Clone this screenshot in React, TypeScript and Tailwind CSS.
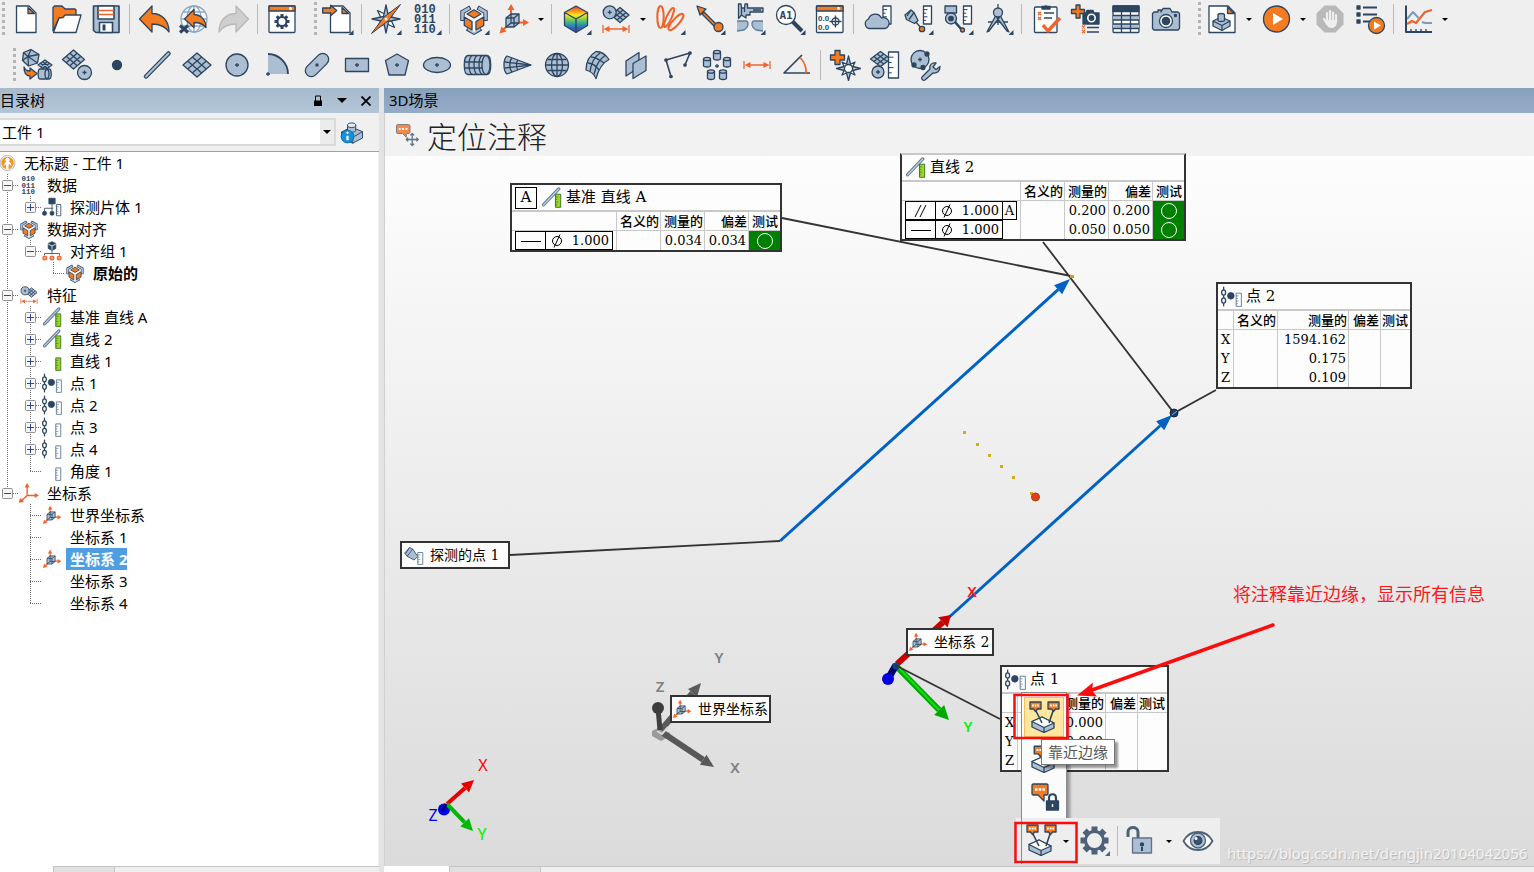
import type { ReactNode } from 'react';

const N = '#2c4560';
const L = '#abbed2';
const O = '#f47b20';
const R = '#f0642c';

const uiFont = "font-['Noto_Sans','Noto_Sans_CJK_SC',sans-serif]";
const noteFont = "font-['DejaVu_Serif','Noto_Sans_CJK_SC',serif]";

/* ---------- icon parts ---------- */

function Mesh({ x, y, w, h }: { x: number; y: number; w: number; h: number }) {
  const lines: string[] = [];
  for (const t of [1 / 3, 2 / 3]) {
    lines.push(`M${x - w + w * t} ${y - h * t}L${x + w * t} ${y + h - h * t}`);
    lines.push(`M${x - w + w * t} ${y + h * t}L${x + w * t} ${y - h + h * t}`);
  }
  return (
    <g>
      <path d={`M${x - w} ${y}L${x} ${y - h}L${x + w} ${y}L${x} ${y + h}z`} />
      <path d={lines.join('')} fill="none" />
    </g>
  );
}

function Ruler({ x, y, w = 8, h = 18, fill = '#fff', stroke = N }: { x: number; y: number; w?: number; h?: number; fill?: string; stroke?: string }) {
  const s = h / 5;
  return (
    <g stroke={stroke}>
      <rect x={x} y={y} width={w} height={h} fill={fill} />
      <path d={`M${x} ${y + s}h${w / 2}M${x} ${y + 2 * s}h${w / 3}M${x} ${y + 3 * s}h${w / 2}M${x} ${y + 4 * s}h${w / 3}`} fill="none" strokeWidth="1" />
    </g>
  );
}

const corner = <path d="M31.5 27v5h-5z" fill={N} stroke="none" />;
const plusMark = (x: number, y: number) => <path d={`M${x - 2} ${y}h4M${x} ${y - 2}v4`} fill="none" />;
const can = (x: number, y: number) => (
  <g key={`${x}-${y}`}>
    <path d={`M${x - 3.5} ${y - 3}v6.500c0 2 7 2 7 0v-6.500`} />
    <ellipse cx={x} cy={y - 3} rx="3.500" ry="1.700" />
  </g>
);
const dimension = (y: number) => (
  <g stroke={R} fill={R} strokeWidth="1.300">
    <path d={`M3 ${y - 4}v8M29 ${y - 4}v8M6 ${y}h20`} />
    <path d={`M3.500 ${y}l6-3v6zM28.500 ${y}l-6-3v6z`} stroke="none" />
  </g>
);
const bubble = (x: number, y: number) => (
  <g>
    <path d={`M${x} ${y}h11v7h-3.500l-2 2.500-2-2.500H${x}z`} fill={O} />
    <path d={`M${x + 2} ${y + 3.500}h7`} stroke="#fff" strokeWidth="1.800" strokeDasharray="1.800 0.900" />
  </g>
);
const slab = (
  <g>
    <path d="M4 20.500l10-4.500 12 6v5l-10 4.500L4 26z" />
    <path d="M4 20.500l10-4.500 12 6-10 4.500z" fill="#fff" />
    <path d="M16 26.500v5" />
  </g>
);
const alignCube = (
  <g>
    <g fill="none" strokeWidth="4.500" strokeLinejoin="miter">
      <path d="M4.500 18V9l8-4.500M27.500 18V9l-8-4.500M9 25.500l7 4 7-4" />
      <path d="M4.500 17V9l7-4M27.500 17V9l-7-4M10 26l6 3.500 6-3.500" stroke={L} strokeWidth="2.600" />
    </g>
    <path d="M8 10l8-5 8 5 1.500 3.500v10L16 29l-9.500-5.500v-10z" fill="#f3f5f8" stroke="none" />
    <path d="M9 11l7-4.200 7 4.200-7 4z" fill={O} />
    <path d="M6.300 14l7.700 4.500v8.500l-7.700-4.500zM25.700 14L18 18.500v8.500l7.700-4.500z" fill={O} />
  </g>
);
const axesCube = (
  <g>
    <path d="M13 11V5M20 19.500h7M9 23l-5 5" stroke={R} strokeWidth="2" />
    <path d="M13 1l3.500 6h-7zM31 19.500l-6 3.500v-7zM1.500 30.500l2-7 5 5z" fill={R} stroke="none" />
    <path d="M8 15l5-4h8v9l-5 4H8z" />
    <path d="M8 15h8v9M16 15l5-4M13 11v9h8M13 20l-5 4" fill="none" />
  </g>
);
const features = (
  <g>
    <Mesh x={20} y={12} w={9} h={7.5} />
    <circle cx="9.700" cy="9.300" r="6.500" />
    {plusMark(9.7, 9.3)}
    {dimension(26)}
  </g>
);
const bits = (
  <g fill={N} stroke="none" fontFamily="Liberation Mono, monospace" fontWeight="700" fontSize="12">
    <text x="4" y="10">010</text>
    <text x="4" y="20">011</text>
    <text x="4" y="30">110</text>
  </g>
);
const probe = (
  <g>
    <path d="M1 13l8-9 5 2.500 8 12-6 5.500-11-6z" />
    <path d="M9 4l-6.500 10M14 6.500L5 18" fill="none" />
  </g>
);
const part = (
  <g>
    <path d="M2 16l13-6.500 15 6v8.500l-13 7L2 24z" />
    <path d="M2 16l15 7 13-7.500M17 23v8" fill="none" />
    <path d="M10 7v7c0 3 11 3 11 0V7" />
    <ellipse cx="15.500" cy="7" rx="5.500" ry="3" fill="#e5ebf2" />
  </g>
);
const gearTeeth = (cx: number, cy: number, r: number, w: number) =>
  [0, 45, 90, 135, 180, 225, 270, 315].map((a) => (
    <rect key={a} x={cx - w / 2} y={cy - r} width={w} height={r * 0.4} transform={`rotate(${a} ${cx} ${cy})`} stroke="none" />
  ));

/* ---------- icons ---------- */

const icons: Record<string, ReactNode> = {
  新建: (
    <g>
      <path d="M6.500 3h12.500l7 7v19.500H6.500z" fill="#fff" />
      <path d="M18 4.500v6h6.500z" fill={O} />
    </g>
  ),
  打开: (
    <g>
      <path d="M3 28V4.500L4.500 3h7.500l3 3h10l1 1v8L9 15z" fill={O} />
      <path d="M3.500 29.500L9 15l4-.500 2-2.500h16l-5 17.500z" fill="#fff" />
    </g>
  ),
  保存: (
    <g strokeWidth="1.600">
      <path d="M3.500 3h25.500v26.500H6l-2.500-2z" />
      <path d="M8 3h16v13H8z" fill="#fff" />
      <path d="M8.500 7.500h15M8.500 11.500h15" stroke={R} />
      <path d="M9.500 29.500v-10h13v10z" fill="#fff" />
      <path d="M12.500 21.500h3v6h-3z" fill={N} stroke="none" />
    </g>
  ),
  撤销: <path d="M1.500 16L14 3v7.500c10 0 17 7 17 18.500-4-6-9-8-17-8v8z" fill={O} />,
  全部撤销: (
    <g>
      <g stroke="#8da7c0" fill="#f4f7fa">
        <circle cx="16" cy="16" r="13" />
        <path d="M16 3v26M3 16h26M5 9h22M5 23h22" />
        <ellipse cx="16" cy="16" rx="7" ry="13" fill="none" />
      </g>
      <path d="M6.500 16L16 6.500v5c7 0 12 6 12 13-3-4-7-5-12-5v5z" fill={O} />
      <path d="M2 22.500l8 7M10 22.500l-8 7" strokeWidth="3" />
    </g>
  ),
  重做: <path d="M30.500 16L18 3v7.500C8 10.500 1 17.500 1 29c4-6 9-8 17-8v8z" fill="#cfcfcf" stroke="#b9b9b9" />,
  设置窗口: (
    <g>
      <rect x="3" y="3" width="26" height="26.500" rx="1" fill="#fff" />
      <path d="M3 3h26v5H3z" fill={O} />
      <circle cx="24.500" cy="5.500" r="1.500" fill="#fff" stroke="none" />
      <g fill={N}>{gearTeeth(16, 18.5, 7.5, 3)}</g>
      <circle cx="16" cy="18.500" r="4.500" fill="#fff" strokeWidth="2" />
    </g>
  ),
  导入: (
    <g>
      <path d="M8.500 3H21l7 7v19.500H8.500z" fill="#fff" />
      <path d="M20 4.500v6h6.500z" fill={O} />
      <path d="M.700 5h8V2.200l6 5.300-6 5.300V10h-8z" fill={O} />
      {corner}
    </g>
  ),
  对齐: (
    <g>
      <path d="M7.500 7.500l8.500 4 8.500-4-4 8.500 4 8.500-8.500-4-8.500 4 4-8.500z" fill="#fff" />
      <path d="M16 2l2.500 11.500L30 16l-11.500 2.500L16 30l-2.500-11.500L2 16l11.500-2.500z" />
      <path d="M30.500 1.500L18 18 1.500 30.500 14 14z" fill={O} strokeWidth="1" />
      <circle cx="16" cy="16" r="1.500" fill="#fff" stroke="none" />
      {corner}
    </g>
  ),
  数据: <g>{bits}{corner}</g>,
  数据对齐: <g>{alignCube}{corner}</g>,
  坐标系: axesCube,
  颜色图: (
    <g>
      <defs>
        <linearGradient id="spectrum" x1="0" x2="0" y1="0" y2="1">
          <stop offset="0" stopColor="#f0322a" />
          <stop offset=".2" stopColor="#ff9a1a" />
          <stop offset=".34" stopColor="#ffe81c" />
          <stop offset=".5" stopColor="#7fd04a" />
          <stop offset=".68" stopColor="#2ba0a8" />
          <stop offset=".84" stopColor="#2f63c0" />
          <stop offset="1" stopColor="#7b3fb0" />
        </linearGradient>
      </defs>
      <path d="M16 3l11.500 6.500v13L16 29.500 4.500 22.500v-13z" fill="url(#spectrum)" />
      <path d="M4.500 9.500L16 16l11.500-6.500M16 16v13.500" fill="none" />
      {corner}
    </g>
  ),
  特征: features,
  横截面: (
    <g>
      <g fill="none" stroke={R} strokeWidth="2">
        <ellipse cx="6.500" cy="14" rx="3.200" ry="11" />
        <ellipse cx="15" cy="14.500" rx="2.500" ry="10.500" transform="rotate(25 15 14.500)" />
        <ellipse cx="22" cy="19" rx="3.200" ry="10.500" transform="rotate(42 22 19)" />
      </g>
      {corner}
    </g>
  ),
  偏差: (
    <g>
      <path d="M10 9l13 13-2 2L8 11z" fill={O} />
      <path d="M3 3l9 3-6 6z" fill={O} />
      <circle cx="24.500" cy="24" r="4.500" fill={O} />
      {corner}
    </g>
  ),
  卡尺: (
    <g>
      <path d="M4.500 1h2.500l.500 4h3l.500-4h2.500v4H29v4H16v3h-4v3l-4.500-3-3 3.500z" />
      <path d="M19 7h8M7.500 5v7M10.500 5v4" />
      <path d="M3 18h9c1.500 0 2 1 2 3s-1 4-4 6l-7 1M29 18h-9c-1.500 0-2 1-2 3s1 4 4 6l7 1" stroke="#5f7e9c" />
      {corner}
    </g>
  ),
  查询: (
    <g>
      <path d="M18 18l10 10" strokeWidth="4" />
      <circle cx="12" cy="12" r="9.500" fill="#fff" />
      <text x="5.500" y="16" fontFamily="DejaVu Sans Mono, monospace" fontWeight="700" fontSize="11" fill={N} stroke="none">A1</text>
      {corner}
    </g>
  ),
  数值窗口: (
    <g>
      <rect x="2.500" y="3" width="26.500" height="26.500" rx="1" fill="#fff" />
      <path d="M2.500 3H29v5H2.500z" fill={O} />
      <circle cx="24.500" cy="5.500" r="1.400" fill="#fff" stroke="none" />
      <g fontFamily="Liberation Sans, sans-serif" fontSize="8" fontWeight="700" fill={N} stroke="none">
        <text x="4" y="18">0.0</text>
        <text x="4" y="27">0.0</text>
      </g>
      <circle cx="21.500" cy="18.500" r="3.500" fill="none" />
      <path d="M15.500 18.500h12M21.500 12.500v12" />
    </g>
  ),
  点云: (
    <g>
      <Ruler x={21} y={3} />
      <path d="M7 25.500a5 5 0 0 1-.500-9.500 7 7 0 0 1 13-1 5.500 5.500 0 0 1 4 10.500z" />
    </g>
  ),
  测头: (
    <g>
      <Ruler x={21.5} y={3} />
      <path d="M3 12l6-5 3 2.500 4 8-3.500 3-8-4z" />
      <path d="M9 7l-4 6M12 9.500l-5 7M14 19l5 6" fill="none" />
      <circle cx="20" cy="26" r="2.700" fill={O} />
      {corner}
    </g>
  ),
  扫描: (
    <g>
      <Ruler x={21.5} y={3} />
      <path d="M3 3h11.500v7H3z" />
      <circle cx="9" cy="15.500" r="5.500" />
      <circle cx="9" cy="15.500" r="2.200" fill={N} />
      <path d="M13 19l7 8" strokeWidth="2.500" />
      <circle cx="20.500" cy="27" r="2" fill={O} />
      {corner}
    </g>
  ),
  圆规: (
    <g>
      <path d="M16 1v4M6 19h20" />
      <path d="M13.500 13L5 29l1.500-.5L17 15zM18.500 13L27 29l-1.500-.5L15 15z" />
      <circle cx="16" cy="9.500" r="4.500" />
      <path d="M16 14v8" />
      {corner}
    </g>
  ),
  检查: (
    <g>
      <rect x="4.500" y="4" width="22.500" height="25.500" rx="1" fill="#fff" />
      <path d="M12 6V3.500h2.500a2 2 0 0 1 3 0H20V6z" fill={N} />
      <path d="M14 10h10M14 15h8" />
      <path d="M8 9l3 3M11 9l-3 3M8 14l3 3M11 14l-3 3" stroke={R} />
      <path d="M13 22l5 6L30 15" fill="none" stroke={R} strokeWidth="3.500" />
    </g>
  ),
  添加快照: (
    <g>
      <path d="M13 10h3l1-2.500h6l1 2.500h5v11H13z" fill={N} />
      <circle cx="21.500" cy="15" r="3.700" fill={N} stroke="#fff" strokeWidth="1.600" />
      <path d="M6 2h4v4.500h4.500v4H10V15H6v-4.500H1.500v-4H6z" fill={O} />
      <path d="M17 24.500h12M17 29h12" />
      <path d="M12 22.500l3 3M15 22.500l-3 3M12 27l3 3M15 27l-3 3" stroke={R} />
    </g>
  ),
  表格: (
    <g>
      <rect x="3" y="3" width="26" height="26.500" rx="1" fill="#fff" />
      <path d="M3 12.500h26v4.500H3zM3 21h26v4.500H3z" stroke="none" />
      <path d="M3 3h26v5.500H3z" fill={N} />
      <path d="M3 12.500h26M3 17h26M3 21h26M3 25.500h26M11.500 8.500v21M20.500 8.500v21" />
    </g>
  ),
  快照: (
    <g>
      <path d="M4 9h4V7h3v2l2-3.500h7L22 9h6l1.500 1.500v15L28 27H4l-1.500-1.500v-15z" />
      <circle cx="16" cy="18" r="6.500" fill="#fff" />
      <circle cx="16" cy="18" r="3.700" fill={N} />
      <circle cx="25.500" cy="12.500" r="1" fill={N} />
    </g>
  ),
  报告: (
    <g>
      <path d="M3 3h19l7 7v19.500H3z" fill="#fff" />
      <path d="M21.500 4v6.500H28z" fill={O} />
      <path d="M7 18l8-4 9 4v5l-8 4.500L7 23z" />
      <path d="M7 18l9 4.500 8-4.500M16 22.500v5" fill="none" />
      <path d="M12 12v5c0 2 6.500 2 6.500 0v-5c0-2-6.500-2-6.500 0z" />
    </g>
  ),
  运行: (
    <g>
      <circle cx="16.500" cy="16" r="13" fill={O} />
      <path d="M13 10l10 6-10 6z" fill="#fff" stroke="none" />
    </g>
  ),
  停止: (
    <g stroke="none">
      <path d="M10.500 2.500h11l8 8v11l-8 8h-11l-8-8v-11z" fill="#b9b9b9" />
      <path d="M13 10v8M16 8v10M19 9.500v9M22 12v7M10 16l3 5" stroke="#efefef" strokeWidth="2.200" strokeLinecap="round" />
      <path d="M11.500 17h11.500c0 5-1.500 8-5.500 8s-4.500-3-6-6z" fill="#efefef" />
    </g>
  ),
  批处理: (
    <g>
      <path d="M3 3h3v3H3zM3 10h3v3H3zM3 17h3v3H3z" fill={N} />
      <path d="M9 4.500h14M9 11.500h14M9 18.500h8" strokeWidth="1.800" />
      <circle cx="22.500" cy="22.500" r="8" fill={O} />
      <path d="M20 18.500l7 4-7 4z" fill="#fff" stroke="none" />
    </g>
  ),
  图表: (
    <g fill="none">
      <path d="M5 16l6-7 5.500 6M20 19l3 1h7" stroke="#7e9ab4" strokeWidth="2" />
      <path d="M5 21l5-3 4 2 9-11 7-2" stroke={R} strokeWidth="2.200" />
      <path d="M4 2.500V29h26" strokeWidth="2" />
      <path d="M9 26v3M14 26v3M19 26v3M24 26v3" />
    </g>
  ),
  /* second row */
  转换: (
    <g>
      <path d="M10 .500l8 5-1.500 8.500-9 3-6-5.500 1-8z" />
      <path d="M10 .500l-3 7 9.500 6.500M7 7.500l11-2M7 7.500L1.500 11.500M7 7.500l.500 9.500M2.500 3.500L7 7.500" fill="none" />
      <Mesh x={24} y={16} w={7} h={5} />
      <path d="M3 18c1 3 3 4 6 4v-3l7 5.500L9 30v-3c-4 0-6-3-6-9z" fill={O} />
      <path d="M19 20h9c3 0 3 10 0 10h-9c-2.500 0-2.500-10 0-10z" />
      <ellipse cx="26" cy="25" rx="2" ry="4.500" />
    </g>
  ),
  曲面: (
    <g>
      <Mesh x={12.5} y={10.5} w={11} h={9.5} />
      <circle cx="23.500" cy="23.500" r="7" />
      {plusMark(23.5, 23.5)}
    </g>
  ),
  点: <circle cx="16" cy="16" r="4.500" fill={N} />,
  直线: (
    <g>
      <path d="M5 27.500L27.500 4.500" strokeWidth="4.500" strokeLinecap="round" />
      <path d="M5 27.500L27.500 4.500" stroke={L} strokeWidth="2" strokeLinecap="round" />
    </g>
  ),
  平面: <Mesh x={16} y={16} w={14} h={12} />,
  圆: <g><circle cx="16" cy="16" r="11" />{plusMark(16, 16)}</g>,
  圆弧: (
    <g>
      <path d="M7 5a20 20 0 0 1 20 20H7z" stroke="none" />
      <path d="M7 5a20 20 0 0 1 20 20" fill="none" strokeWidth="1.800" />
      {plusMark(7, 25)}
    </g>
  ),
  槽: (
    <g>
      <rect x="2" y="10" width="28" height="12" rx="6" transform="rotate(-45 16 16)" />
      <path d="M14.500 14.500h3v3h-3z" fill={N} stroke="none" />
    </g>
  ),
  矩形: <g><rect x="4.500" y="9.500" width="23" height="13" />{plusMark(16, 16)}</g>,
  多边形: <g><path d="M16 5l11.500 6.500L24 26H8L4.500 11.500z" />{plusMark(16, 16)}</g>,
  椭圆: <g><ellipse cx="16" cy="16" rx="13.500" ry="7.500" />{plusMark(16, 16)}</g>,
  圆柱: (
    <g>
      <path d="M7 6.500h19c5 0 5 19 0 19H7c-5 0-5-19 0-19z" />
      <ellipse cx="25" cy="16" rx="4" ry="9.500" />
      <path d="M11 6.500c-4 3-4 16 0 19M16 6.500c-4 3-4 16 0 19M21 6.500c-4 3-4 16 0 19M4 13h18M4 19h18" fill="none" />
    </g>
  ),
  圆锥: (
    <g>
      <path d="M6 7l24 9-24 9c-4-3-4-15 0-18z" />
      <path d="M11 9c-3 3-3 11 0 14M17 11c-2 2-2 8 0 10M4 13l26 3M4 19l26-3" fill="none" />
    </g>
  ),
  球: (
    <g>
      <circle cx="16" cy="16" r="11.500" />
      <ellipse cx="16" cy="16" rx="5.500" ry="11.500" fill="none" />
      <path d="M16 4.500v23M4.500 16h23M6.500 10.500h19M6.500 21.500h19" />
    </g>
  ),
  自由曲面: (
    <g>
      <path d="M5 21C5 12 9 6 15 2.500c5 0 9 2 13 8-6 3-10 8-13 19-2-5-5-7-10-8.500z" />
      <path d="M7 14c4 0 8 3 11 7M10 8c5 0 9 3 13 6M19 4c-6 4-9 11-10 19M24 6.500c-6 4-9 9-11 19" fill="none" />
    </g>
  ),
  平行面: <g><path d="M5 12l13-8.500v15L5 27z" /><path d="M12 14.500l13-7.500v14.500l-13 8z" /></g>,
  折线: (
    <g>
      <path d="M10 27.500L5 11l24-7-5 12" fill="none" strokeWidth="1.600" />
      <g fill={N}>
        <circle cx="10" cy="27.500" r="1.200" /><circle cx="5" cy="11" r="1.200" /><circle cx="29" cy="4" r="1.200" /><circle cx="24" cy="16" r="1.200" />
      </g>
    </g>
  ),
  阵列: <g>{can(16, 6)}{can(6, 13)}{can(26, 13)}{can(10, 25.5)}{can(22, 25.5)}{plusMark(16, 17)}</g>,
  距离: dimension(16),
  角度: (
    <g fill="none" strokeWidth="1.700">
      <path d="M21 6L3 24h26" />
      <path d="M19.500 9a20 20 0 0 1 5.500 15" stroke={R} />
    </g>
  ),
  添加基准: (
    <g>
      <path d="M13 13l6.500 3 6.500-3-3 6.500 3 6.500-6.500-3-6.500 3 3-6.500z" fill="#fff" />
      <path d="M19.500 7l2.500 10 9.500 2.500-9.500 2.500-2.500 9.500-2.500-9.500-9.500-2.500 9.500-2.500z" />
      <circle cx="19.500" cy="19.500" r="4" fill="#fff" />
      <path d="M6 1.500h5V6h4.500v5H11v4.500H6V11H1.500V6H6z" fill={O} />
    </g>
  ),
  测量特征: (
    <g>
      <Mesh x={11.5} y={10} w={10} h={7.5} />
      <circle cx="9" cy="23" r="6" />
      {plusMark(9, 23)}
      <Ruler x={19.5} y={3} w={10} h={26} />
    </g>
  ),
  特征工具: (
    <g>
      <circle cx="11" cy="10.500" r="9" />
      {plusMark(11, 10.5)}
      <g fill={N}><circle cx="18" cy="5" r="2" /><circle cx="5" cy="16" r="2" /><circle cx="14" cy="18.500" r="2" /></g>
      <path d="M13 28l8-8c-1-4 2-7 6-6l-3 4 3 2.500 4-3c0 5-3 7-7 6.500l-8 7c-2 1-4-1-3-3z" />
    </g>
  ),
};

const chainLinks = (
  <g>
    <path d="M4 1v30" strokeWidth="2" />
    <g fill="#fff" strokeWidth="2"><ellipse cx="4" cy="10" rx="3" ry="4" /><ellipse cx="4" cy="22" rx="3" ry="4" /></g>
  </g>
);

const treeIcons: Record<string, ReactNode> = {
  root: (
    <g stroke="none">
      <circle cx="15" cy="16" r="15" fill="#fff" stroke="#8ca0b0" strokeWidth="1.500" />
      <circle cx="15" cy="16" r="12.500" fill="#f7941d" />
      <path d="M12 28V18l-4 5c1-6 2-9 5-10a4 4 0 1 1 4 0c4 1 5 4 6 10l-4-5-2 2v8z" fill="#fff" />
    </g>
  ),
  bits,
  align: alignCube,
  features,
  patch: (
    <g fill={N}>
      <path d="M11 2h10v9H11z" />
      <path d="M16 11v7M4 23v-5h14M16 18v5" fill="none" />
      <rect x="1" y="23" width="6" height="6" rx="2" /><rect x="13" y="23" width="6" height="6" rx="2" />
      <Ruler x={23} y={12} w={7} h={18} />
    </g>
  ),
  group: (
    <g>
      <path d="M10 4l6-3 6 3v8l-6 3-6-3z" fill={N} />
      <path d="M16 15v6M4 23v-3h24v3" fill="none" />
      <path d="M16 8v6M10 5l6 3 6-3" stroke="#fff" fill="none" />
      <g fill="#f6a982" stroke={R} strokeWidth="2"><circle cx="4.500" cy="27" r="3" /><circle cx="16" cy="27" r="3" /><circle cx="27.500" cy="27" r="3" /></g>
    </g>
  ),
  line: (
    <g>
      <path d="M4 27L27 3" stroke="#5b7896" strokeWidth="5" strokeLinecap="round" />
      <path d="M4 27L27 3" stroke="#c2cfdd" strokeWidth="2" strokeLinecap="round" />
      <Ruler x={22} y={11} w={8} h={20} fill="#9bd62b" stroke="#2c6a1c" />
    </g>
  ),
  green: <Ruler x={22} y={11} w={8} h={20} fill="#9bd62b" stroke="#2c6a1c" />,
  ruler: <Ruler x={22} y={11} w={8} h={20} stroke="#4e6c8c" />,
  chain: <g>{chainLinks}<Ruler x={22} y={11} w={8} h={20} stroke="#4e6c8c" /></g>,
  point: (
    <g>
      {chainLinks}
      <circle cx="15" cy="15" r="5" fill={N} />
      <Ruler x={23} y={11} w={8} h={20} stroke="#4e6c8c" />
    </g>
  ),
  axes: (
    <g stroke={R} fill={R} strokeWidth="2.200">
      <path d="M13 20V4M13 20h16M13 20L3 29" />
      <path d="M13 0l4 7H9zM32 20l-7 4v-8zM-1 32l3-8 6 6z" stroke="none" />
    </g>
  ),
  cube: axesCube,
  probe: <g>{probe}<Ruler x={22} y={12} w={8} h={19} stroke="#4e6c8c" /></g>,
  none: null,
};

function Svg({ children, className = 'size-8' }: { children: ReactNode; className?: string }) {
  return (
    <svg viewBox="0 0 32 32" className={`shrink-0 ${className}`} fill={L} stroke={N} strokeWidth="1.300" strokeLinejoin="round" aria-hidden="true">
      {children}
    </svg>
  );
}

/* ---------- toolbars ---------- */

function Caret({ label }: { label: string }) {
  return (
    <button type="button" aria-label={label} className="flex h-8 w-3.5 items-center justify-center">
      <svg viewBox="0 0 6 3" className="h-[3px] w-1.5" aria-hidden="true"><path d="M0 0h6L3 3z" /></svg>
    </button>
  );
}

function Grip({ wide }: { wide?: boolean }) {
  return (
    <div className={wide ? 'flex w-4 justify-end' : 'flex w-1.5 justify-end'}>
      <svg viewBox="0 0 4 34" className="h-[34px] w-1 self-center" aria-hidden="true">
        {[0, 6, 12, 18, 24, 30].map((y) => <path key={y} d={`M0 ${y}h3v3H0z`} fill="#b4b4b4" />)}
      </svg>
    </div>
  );
}

function Toolbar({ items, label, className }: { items: string[]; label: string; className: string }) {
  return (
    <div role="toolbar" aria-label={label} className={`flex items-center ${className}`}>
      {items.map((item, i) => {
        if (item === '|') return <div key={i} className="flex w-2 pl-[3px]"><div className="h-[30px] w-px bg-[#b9b9b9]" /></div>;
        if (item === ':') return <Grip key={i} />;
        if (item === '::') return <Grip key={i} wide />;
        if (item === 'v') return <Caret key={i} label={`${items[i - 1]}选项`} />;
        return (
          <button key={i} type="button" aria-label={item} className="flex w-10 shrink-0 justify-center">
            <Svg>{icons[item]}</Svg>
          </button>
        );
      })}
    </div>
  );
}

const row1 = [
  ':', '新建', '打开', '保存', '|', '撤销', '全部撤销', '重做', '|', '设置窗口', '::', '导入', '|', '对齐', '数据', '|',
  '数据对齐', '坐标系', 'v', '|', '颜色图', '特征', 'v', '横截面', '偏差', '卡尺', '查询', '数值窗口', '|', '点云', '测头', '扫描', '圆规', '|',
  '检查', '添加快照', '表格', '快照', '::', '报告', 'v', '运行', 'v', '停止', '批处理', '|', '图表', 'v',
];
const row2 = [
  '::', '转换', '曲面', '点', '直线', '平面', '圆', '圆弧', '槽', '矩形', '多边形', '椭圆', '圆柱', '圆锥', '球', '自由曲面', '平行面',
  '折线', '阵列', '距离', '角度', '|', '添加基准', '测量特征', '特征工具',
];

/* ---------- tree ---------- */

type TreeNode = { cells: string; icon: string; label: string; bold?: boolean; selected?: boolean };

// One character per indent column: "|" passes through, "T" branch, "L" last branch,
// "-" expanded, "+" collapsed, "m" and "p" the same two on the last row of a group.
const nodes: TreeNode[] = [
  { cells: '', icon: 'root', label: '无标题 - 工件 1' },
  { cells: '-', icon: 'bits', label: '数据' },
  { cells: '|p', icon: 'patch', label: '探测片体 1' },
  { cells: '-', icon: 'align', label: '数据对齐' },
  { cells: '|m', icon: 'group', label: '对齐组 1' },
  { cells: '| L', icon: 'align', label: '原始的', bold: true },
  { cells: '-', icon: 'features', label: '特征' },
  { cells: '|+', icon: 'line', label: '基准 直线 A' },
  { cells: '|+', icon: 'line', label: '直线 2' },
  { cells: '|+', icon: 'green', label: '直线 1' },
  { cells: '|+', icon: 'point', label: '点 1' },
  { cells: '|+', icon: 'point', label: '点 2' },
  { cells: '|+', icon: 'chain', label: '点 3' },
  { cells: '|+', icon: 'chain', label: '点 4' },
  { cells: '|L', icon: 'ruler', label: '角度 1' },
  { cells: 'm', icon: 'axes', label: '坐标系' },
  { cells: ' T', icon: 'cube', label: '世界坐标系' },
  { cells: ' T', icon: 'none', label: '坐标系 1' },
  { cells: ' T', icon: 'cube', label: '坐标系 2', selected: true },
  { cells: ' T', icon: 'none', label: '坐标系 3' },
  { cells: ' L', icon: 'none', label: '坐标系 4' },
];

function Guide({ kind, first }: { kind: string; first: boolean }) {
  const boxed = '-+mp'.includes(kind);
  const through = '|T-+'.includes(kind);
  return (
    <svg viewBox={first ? '4 0 19 22' : '0 0 23 22'} className={first ? 'h-[22px] w-[19px] shrink-0' : 'h-[22px] w-[23px] shrink-0'} fill="none" aria-hidden="true">
      {kind !== ' ' && <path d={through ? 'M11.500 0V22' : 'M11.500 0V12'} stroke="#6f6f6f" strokeDasharray="1 1" />}
      {kind !== ' ' && kind !== '|' && <path d="M11 11.500H23" stroke="#6f6f6f" strokeDasharray="1 1" />}
      {boxed && (
        <g>
          <rect x="6.500" y="6.500" width="10" height="10" rx="1" fill="#f6f6f6" stroke="#919191" />
          <path d={kind === '+' || kind === 'p' ? 'M8 11.500h7M11.500 8v7' : 'M8 11.500h7'} stroke="#2b4a9b" />
        </g>
      )}
    </svg>
  );
}

function TreeRow({ cells, icon, label, bold, selected }: TreeNode) {
  return (
    <li className="flex h-[22px] items-center">
      {cells.split('').map((c, i) => <Guide key={i} kind={c} first={i === 0} />)}
      <Svg className={cells ? 'size-5' : 'size-4'}>{treeIcons[icon]}</Svg>
      <span className={`ml-1 whitespace-pre pl-1 text-[15px] leading-[22px] ${selected ? 'bg-[#4d9ee2] font-bold text-white' : ''} ${bold ? 'font-bold' : ''}`}>{label}</span>
    </li>
  );
}

function TreePanel() {
  return (
    <aside className="flex w-[379px] shrink-0 flex-col bg-[#f0f0f0]">
      <header className="flex h-[25px] shrink-0 items-center bg-linear-to-b from-[#a7bacd] to-[#b3c6d8] pr-px">
        <h2 className="flex-1 text-[15px]">目录树</h2>
        <button type="button" aria-label="锁定" className="flex w-6 justify-center">
          <svg viewBox="0 0 10 12" className="h-3 w-2.5" aria-hidden="true"><path d="M2.500 6V1h5v5" fill="none" stroke="#000" /><path d="M1 5.500h8V11H1z" /></svg>
        </button>
        <button type="button" aria-label="菜单" className="flex w-6 justify-center">
          <svg viewBox="0 0 10 5" className="h-[5px] w-2.5" aria-hidden="true"><path d="M0 0h10L5 5z" /></svg>
        </button>
        <button type="button" aria-label="关闭" className="flex w-6 justify-center">
          <svg viewBox="0 0 10 10" className="size-2.5" aria-hidden="true"><path d="M.500.500l9 9M9.500.500l-9 9" stroke="#000" strokeWidth="1.800" /></svg>
        </button>
      </header>
      <div className="flex h-[39px] shrink-0 items-center border-b border-[#a0a0a0]">
        <div className="grid w-[336px] items-center">
          <select aria-label="工件" className="col-start-1 row-start-1 h-7 appearance-none border-2 border-l-0 border-[#dadada] bg-white pl-0.5 text-[15px]">
            <option>工件 1</option>
          </select>
          <span className="pointer-events-none col-start-1 row-start-1 mr-0.5 flex h-6 w-3.5 items-center justify-center justify-self-end bg-[#ececec]">
            <svg viewBox="0 0 8 4" className="h-1 w-2" aria-hidden="true"><path d="M0 0h8L4 4z" /></svg>
          </span>
        </div>
        <button type="button" aria-label="工件信息" className="ml-1">
          <Svg className="size-6">
            {part}
            <circle cx="10" cy="22" r="8.500" fill="#1492dc" stroke="#0b6fae" />
            <path d="M10 21v6" stroke="#fff" strokeWidth="3" /><circle cx="10" cy="17" r="1" fill="#fff" stroke="#fff" />
          </Svg>
        </button>
      </div>
      <ul className="mr-px flex-1 bg-white">
        {nodes.map((n, i) => <TreeRow key={i} {...n} />)}
      </ul>
      <div className="flex h-1.5 shrink-0">
        <div className="w-[53px] bg-white" />
        <div className="w-[62px] border border-b-0 border-[#c4c4c4] bg-[#e0e0e0]" />
        <div className="flex-1 border-t border-[#c4c4c4]" />
      </div>
    </aside>
  );
}

/* ---------- annotations ---------- */

const Diameter = () => (
  <svg viewBox="0 0 14 14" className="size-3.5 shrink-0" fill="none" stroke="#000" role="img" aria-label="直径"><circle cx="7" cy="7" r="4.500" /><path d="M4 13.500L10 .500" /></svg>
);

function Tolerance({ parallel, datum }: { parallel?: boolean; datum?: string }) {
  return (
    <div className="ml-[3px] flex h-[19px] w-fit border border-black">
      <span className="flex w-[30px] items-center justify-center border-r border-black">
        <svg viewBox="0 0 20 16" className="h-4 w-5" stroke="#000" aria-hidden="true">
          <path d={parallel ? 'M4 14L10 2M9 14L15 2' : 'M0 8.500H20'} />
        </svg>
      </span>
      <span className="flex w-[66px] items-center justify-between pl-1 pr-[3px] leading-[17px]"><Diameter />1.000</span>
      {datum && <span className="flex w-[14px] items-center justify-center border-l border-black leading-[17px]">{datum}</span>}
    </div>
  );
}

const Pass = () => (
  <span className="flex h-[19px] items-center justify-center bg-[#008000]">
    <span className="size-4 rounded-full border border-white" aria-label="通过" role="img" />
  </span>
);

type Note = { place: string; icon: string; title: string; datum?: string; cols: string[]; rows: ReactNode[][]; topClass?: string };

function NoteTable({ place, icon, title, datum, cols, rows, topClass = '' }: Note) {
  const heads = ['', '名义的', '测量的', '偏差', '测试'];
  return (
    <section className={`absolute border-2 border-[#333] bg-[#fdfdfd] ${topClass} ${noteFont} ${place}`}>
      <h3 className="flex h-[27px] items-center gap-1 border-b-2 border-[#c8c8c8] pl-[3px] text-[15px]">
        {datum && <span className="flex size-[22px] items-center justify-center border border-black">{datum}</span>}
        <Svg className="size-[21px]">{treeIcons[icon]}</Svg>
        <span className="whitespace-pre">{title}</span>
      </h3>
      <table className="w-full table-fixed border-separate border-spacing-0 text-[13px]">
        <colgroup>{cols.map((c, i) => <col key={i} className={c} />)}</colgroup>
        <thead>
          <tr className="h-[19px]">
            {heads.map((h, i) => (
              <th key={i} className={`border-b border-[#c8c8c8] p-0 pt-0.5 text-right text-[13px] leading-4 font-medium whitespace-nowrap ${i < 4 ? 'border-r pr-px' : 'pr-0.5'}`}>{h}</th>
            ))}
          </tr>
        </thead>
        <tbody>
          {rows.map((r, i) => (
            <tr key={i} className="h-[19px]">
              {r.map((c, j) => (
                <td key={j} className={`p-0 leading-[19px] ${j < 4 ? 'border-r border-[#c8c8c8]' : ''} ${j > 0 && j < 4 ? 'pr-0.5 text-right' : ''}`}>{c}</td>
              ))}
            </tr>
          ))}
        </tbody>
      </table>
    </section>
  );
}

function NoteLabel({ place, icon, children }: { place: string; icon: string; children: ReactNode }) {
  return (
    <div className={`absolute flex items-center gap-1.5 border-2 border-[#333] bg-[#fdfdfd] text-[14px] whitespace-pre ${noteFont} ${place}`}>
      <Svg className="size-5">{treeIcons[icon]}</Svg>
      {children}
    </div>
  );
}

const axis = (s: string) => <span className="pl-[3px]">{s}</span>;

const edgeIcon = (
  <g>
    {slab}
    <path d="M8 10l6 12M25 10l-4 12" strokeWidth="1.600" />
    {bubble(2, 1)}
    {bubble(20, 1)}
  </g>
);

/* ---------- scene drawing ---------- */

function Arrow({ x1, y1, x2, y2, color, width = 5, head = 13, wing = 6 }: { x1: number; y1: number; x2: number; y2: number; color: string; width?: number; head?: number; wing?: number }) {
  const d = Math.hypot(x2 - x1, y2 - y1);
  const ux = (x2 - x1) / d;
  const uy = (y2 - y1) / d;
  const bx = x2 - ux * head;
  const by = y2 - uy * head;
  return (
    <g fill={color} stroke="none">
      <path d={`M${x1} ${y1}L${bx} ${by}`} stroke={color} strokeWidth={width} />
      <path d={`M${x2} ${y2}L${bx - uy * wing} ${by + ux * wing}L${bx + uy * wing} ${by - ux * wing}z`} />
    </g>
  );
}

function SceneDrawing() {
  return (
    <svg className="absolute inset-0 size-full" fill="none" aria-hidden="true">
      <g transform="translate(-385 -113)">
        <g stroke="#333" strokeWidth="1.800">
          <path d="M782 218L1071 276M1043 242L1174 413L1216 390M510 555L780 541" />
        </g>
        <Arrow x1={780} y1={541} x2={1070} y2={279} color="#0062c4" width={3} head={16} />
        <Arrow x1={946} y1={620} x2={1172} y2={415} color="#0062c4" width={3} head={16} />
        <path d="M1070 275h4v3h-4z" fill="#c9a400" />
        <circle cx="1174" cy="413" r="4" fill="#0d3f78" stroke="#222" />
        <path d="M1172 415l5-4" stroke="#9ab" />
        {[[964, 432], [977, 444], [989, 455], [1001, 466], [1013, 477], [1031, 493]].map(([x, y]) => (
          <path key={x} d={`M${x - 1} ${y - 1}h3v3h-3z`} fill="#d2ab16" />
        ))}
        <circle cx="1035.500" cy="497" r="4" fill="#ee3a16" stroke="#9a4a10" />

        <Arrow x1={897} y1={664} x2={951} y2={615} color="#c80000" width={6} head={11} wing={7} />
        <Arrow x1={897} y1={667} x2={949} y2={720} color="#00a800" width={6} head={14} wing={7} />
        <path d="M898 667l41 43" stroke="#12dd12" strokeWidth="2" />
        <path d="M896 665l-8 14" stroke="#00006e" strokeWidth="7" />
        <circle cx="888" cy="679" r="6" fill="#0000e0" />
        <circle cx="896" cy="666" r="3.500" fill="#0b4a7a" />
        <path d="M895 665L1000 719" stroke="#333" strokeWidth="1.800" />

        <path d="M652 731l6-3 12 5 0 3-9 5-9-5z" fill="#9a9a9a" />
        <Arrow x1={661} y1={730} x2={701} y2={683} color="#5b5b5b" width={6} />
        <Arrow x1={663} y1={733} x2={714} y2={767} color="#585858" width={6} />
        <path d="M657 731l5 3 6-7" stroke="#d9d9d9" strokeWidth="2" />
        <path d="M660 730l-2-22" stroke="#404040" strokeWidth="5" />
        <circle cx="658" cy="708" r="6" fill="#3c3c3c" />

        <circle cx="444" cy="809.500" r="6" fill="#0000ee" />
        <Arrow x1={447} y1={804} x2={474} y2={780} color="#e80000" width={4} head={12} />
        <Arrow x1={447} y1={804} x2={473} y2={831} color="#00b800" width={4} head={12} />
        <path d="M442 811l4-7" stroke="#00006a" strokeWidth="3" />

        <g fontFamily="Noto Sans, sans-serif" fontSize="15" fontWeight="600" textAnchor="middle">
          <text x="972" y="597" fill="#ff1414">X</text>
          <text x="968" y="732" fill="#0df20d">Y</text>
          <g fill="#808080">
            <text x="719" y="663">Y</text>
            <text x="660" y="692">Z</text>
            <text x="735" y="773">X</text>
          </g>
          <g fontWeight="400" fontSize="16">
            <text x="483" y="771" fill="#ff0000">X</text>
            <text x="482" y="840" fill="#00f000">Y</text>
            <text x="433" y="821" fill="#0000f0">Z</text>
          </g>
        </g>
      </g>
    </svg>
  );
}

function Callouts() {
  return (
    <svg className="pointer-events-none absolute inset-0 size-full" fill="none" stroke="#fb0d0d" aria-hidden="true">
      <g transform="translate(-385 -113)" strokeWidth="2.500">
        <rect x="1014.500" y="695" width="53" height="43" />
        <rect x="1015.500" y="823" width="61" height="39" />
        <path d="M1273 625L1092 690" strokeWidth="3.500" strokeLinecap="round" />
        <path d="M1077 695.500l16-13-1 8 5 6z" fill="#fb0d0d" stroke="none" />
      </g>
    </svg>
  );
}

function ViewControls() {
  return (
    <div role="toolbar" aria-label="视图" className="absolute top-[705px] left-[631px] flex h-[46px] w-[204px] items-center bg-[#eeeeee]">
      <button type="button" aria-label="定位注释" className="ml-[5px] flex h-full w-[38px] justify-center border-l border-[#8b8b8b] pt-1.5"><Svg>{edgeIcon}</Svg></button>
      <Caret label="定位注释选项" />
      <button type="button" aria-label="设置" className="ml-1.5 flex w-8 justify-center">
        <Svg>
          <g fill="#4d6278">{gearTeeth(15.5, 15.5, 14, 6)}</g>
          <circle cx="15.500" cy="15.500" r="9" fill="#eeeeee" stroke="#4d6278" strokeWidth="3" />
          <path d="M31 26v5h-5z" fill="#4d6278" stroke="none" />
        </Svg>
      </button>
      <div className="mx-1.5 h-[30px] w-px bg-[#bdbdbd]" />
      <button type="button" aria-label="解锁" className="flex w-8 justify-center">
        <Svg>
          <path d="M4 12V7c0-6 10-6 10 0v7" fill="none" stroke="#4d6278" strokeWidth="3" />
          <rect x="8.500" y="13" width="19" height="15" stroke="#5d7389" />
          <path d="M18 22v4" strokeWidth="2" /><circle cx="18" cy="19.500" r="1.500" fill={N} />
        </Svg>
      </button>
      <span className="ml-1.5 flex"><Caret label="锁定选项" /></span>
      <button type="button" aria-label="可见性" className="ml-1.5 flex w-8 justify-center">
        <Svg>
          <path d="M1.500 16C8 4 24 4 30.500 16 24 28 8 28 1.500 16z" fill="#fff" stroke="#4d6278" strokeWidth="1.800" />
          <circle cx="16" cy="15.500" r="7.500" stroke="#4d6278" />
          <circle cx="16" cy="15.500" r="3.800" fill="#3c556e" /><circle cx="14" cy="13.500" r="1.500" fill="#fff" stroke="none" />
        </Svg>
      </button>
    </div>
  );
}

function PositionMenu() {
  return (
    <div role="menu" className="absolute top-[579px] left-[636px] flex h-[130px] w-[46px] flex-col items-center border border-b-0 border-[#8b8b8b] bg-[#fbfbfb] pt-1 shadow-[3px_2px_3px_rgba(0,0,0,0.35)]">
      <button type="button" role="menuitem" aria-label="靠近边缘" className="flex h-10 w-10 items-center justify-center border border-[#f3bf68] bg-[#ffe7a0]"><Svg>{edgeIcon}</Svg></button>
      <button type="button" role="menuitem" aria-label="靠近对象" className="flex h-10 w-10 items-center justify-center">
        <Svg>{slab}<g transform="translate(3 3) scale(1.100)">{bubble(3, 2)}</g></Svg>
      </button>
      <button type="button" role="menuitem" aria-label="锁定位置" className="flex h-10 w-10 items-center justify-center">
        <Svg>
          <path d="M5 3h14l1 1v9l-1 1h-3v6l-6-6H5l-1-1V4z" fill={O} />
          <path d="M7 8.500h10" stroke="#fff" strokeWidth="2.500" strokeDasharray="2.500 1.250" />
          <path d="M21 21v-4c0-5 7-5 7 0v4" fill="none" strokeWidth="2.200" />
          <rect x="18.500" y="20" width="12" height="9" fill={N} /><path d="M24.500 23v3" stroke="#fff" strokeWidth="1.500" />
        </Svg>
      </button>
    </div>
  );
}

function Scene() {
  return (
    <main className="flex min-w-0 flex-1 flex-col">
      <header className="flex h-[25px] shrink-0 items-center bg-linear-to-b from-[#87a1bb] to-[#96abc7] pl-[5px]">
        <h2 className="text-[15px]">3D场景</h2>
      </header>
      <div className="relative flex flex-1 flex-col overflow-hidden border-l border-[#d0d0d0]">
        <h1 className="flex h-[43px] shrink-0 items-center gap-2 bg-[#f2f2f2] pl-2.5 text-[30px] leading-10 font-light text-[#222]">
          <Svg className="size-6">
            <path d="M3 2h15l2 1v10l-2 1h-3v5l-5-5H3l-1-1V3z" fill="#f58a44" stroke="#7b7b85" />
            <path d="M5 8h12" stroke="#fff" strokeWidth="2.500" strokeDasharray="2.500 2" />
            <path d="M23 14v16M15 22h16M20.500 16.500L23 14l2.500 2.500M20.500 27.500L23 30l2.500-2.500M17.500 19.500L15 22l2.500 2.500M28.500 19.500L31 22l-2.500 2.500" fill="none" stroke="#5d7389" strokeWidth="1.700" />
          </Svg>
          <span className="font-['Noto_Sans_CJK_SC',sans-serif]">定位注释</span>
        </h1>
        <div className="flex-1 bg-linear-to-b from-[#fdfdfd] to-[#dbdbdb]" />

        <SceneDrawing />

        <NoteTable place="left-[125px] top-[70px] w-[272px]" icon="line" title="基准 直线 A" datum="A"
          cols={['w-[105px]', 'w-[44px]', 'w-[44px]', 'w-[44px]', 'w-[31px]']}
          rows={[[<Tolerance />, '', '0.034', '0.034', <Pass />]]} />
        <NoteTable place="left-[515px] top-[40px] w-[286px]" icon="line" title="直线 2" topClass="border-t-[#c8c8c8]"
          cols={['w-[119px]', 'w-[44px]', 'w-[44px]', 'w-[44px]', 'w-[31px]']}
          rows={[
            [<Tolerance parallel datum="A" />, '', '0.200', '0.200', <Pass />],
            [<Tolerance />, '', '0.050', '0.050', <Pass />],
          ]} />
        <NoteTable place="left-[831px] top-[169px] w-[196px]" icon="point" title="点 2"
          cols={['w-[16px]', 'w-[44px]', 'w-[71px]', 'w-[32px]', 'w-[29px]']}
          rows={[[axis('X'), '', '1594.162', '', ''], [axis('Y'), '', '0.175', '', ''], [axis('Z'), '', '0.109', '', '']]} />
        <NoteTable place="left-[615px] top-[552px] w-[169px]" icon="point" title="点 1"
          cols={['w-[16px]', 'w-[44px]', 'w-[44px]', 'w-[32px]', 'w-[29px]']}
          rows={[[axis('X'), '', '0.000', '', ''], [axis('Y'), '', '0.000', '', ''], [axis('Z'), '', '0.000', '', '']]} />

        <NoteLabel place="left-[15px] top-[428px] h-7 w-[110px] pl-0.5" icon="probe">探测的点 1</NoteLabel>
        <NoteLabel place="left-[521px] top-[515px] h-7 w-[88px]" icon="cube">坐标系 2</NoteLabel>
        <NoteLabel place="left-[285px] top-[582px] h-7 w-[101px]" icon="cube">世界坐标系</NoteLabel>

        <p className="absolute top-[468px] left-[848px] text-[18px] leading-[27px] whitespace-nowrap text-[#fb1a1a]">将注释靠近边缘，显示所有信息</p>
        <p className="absolute top-[728px] left-[842px] text-[15px] leading-6 whitespace-nowrap text-[#f3f3f3] [text-shadow:1px_1px_1px_#b4b4b4]">https://blog.csdn.net/dengjin20104042056</p>

        <PositionMenu />
        <ViewControls />
        <div role="tooltip" className="absolute top-[626px] left-[656px] h-[26px] border border-[#767676] bg-white px-1.5 text-[15px] leading-6 whitespace-nowrap text-[#575757] shadow-[3px_3px_2px_rgba(0,0,0,0.4)]">靠近边缘</div>
        <Callouts />
      </div>
      <div className="flex h-1.5 shrink-0 bg-[#f0f0f0]">
        <div className="w-[65px] bg-white" />
        <div className="w-[92px] border border-b-0 border-[#c4c4c4] bg-[#e0e0e0]" />
        <div className="flex-1 border-t border-[#c4c4c4]" />
      </div>
    </main>
  );
}

export default function App() {
  return (
    <div className={`flex h-screen flex-col overflow-hidden bg-[#efefef] text-black ${uiFont}`}>
      <div className="h-[88px] shrink-0">
        <Toolbar items={row1} label="标准" className="h-[38px]" />
        <Toolbar items={row2} label="特征" className="mt-1.5 h-[42px] pl-px" />
      </div>
      <div className="flex min-h-0 flex-1">
        <TreePanel />
        <div className="w-[5px] shrink-0 bg-[#e3e3e3]" />
        <Scene />
      </div>
    </div>
  );
}
